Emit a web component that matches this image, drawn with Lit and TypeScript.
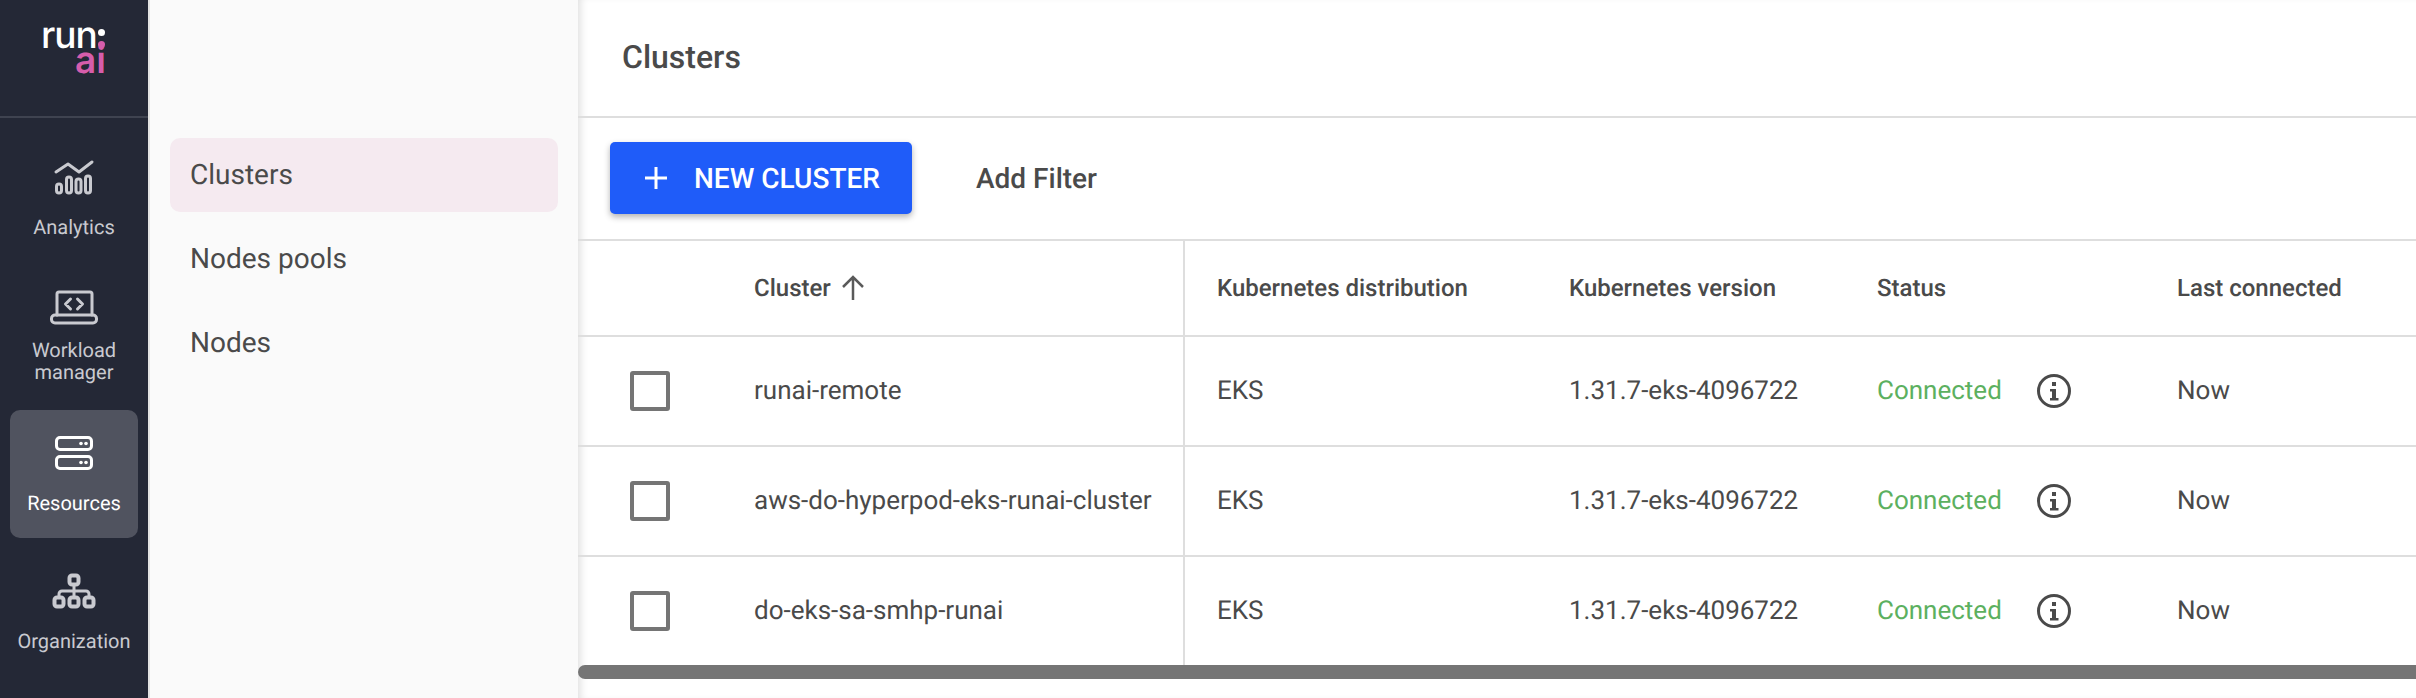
import { LitElement, css, html, svg } from "lit";

const rows = ["runai-remote", "aws-do-hyperpod-eks-runai-cluster", "do-eks-sa-smhp-runai"];

const analyticsIcon = svg`
  <path d="M6 19 18 11 29 19 42 9" />
  <rect x="6.500" y="31" width="5" height="9" rx="2.500" />
  <rect x="16.500" y="24" width="5" height="16" rx="2.500" />
  <rect x="26" y="26" width="5" height="14" rx="2.500" />
  <rect x="35.500" y="23" width="5" height="17" rx="2.500" />
`;

const workloadIcon = svg`
  <path d="M7 33V12a2 2 0 0 1 2-2h31a2 2 0 0 1 2 2v21" />
  <rect x="1.500" y="33" width="45" height="8" rx="3.500" />
  <path d="M20.500 17 15.500 22 20.500 27M27.500 17 32.500 22 27.500 27" />
`;

const resourcesIcon = svg`
  <rect x="6.500" y="8.500" width="35" height="12" rx="3.500" />
  <rect x="6.500" y="27.500" width="35" height="12" rx="3.500" />
  <circle cx="31" cy="14.500" r="1.800" class="dot" />
  <circle cx="36" cy="14.500" r="1.800" class="dot" />
  <circle cx="31" cy="33.500" r="1.800" class="dot" />
  <circle cx="36" cy="33.500" r="1.800" class="dot" />
`;

const organizationIcon = svg`
  <rect x="19.500" y="8.500" width="9" height="9" rx="2.500" class="thick" />
  <rect x="4.500" y="30.500" width="9" height="9" rx="2.500" class="thick" />
  <rect x="19.500" y="30.500" width="9" height="9" rx="2.500" class="thick" />
  <rect x="34.500" y="30.500" width="9" height="9" rx="2.500" class="thick" />
  <path d="M24 18V30M9 30V27a3 3 0 0 1 3-3H36a3 3 0 0 1 3 3V30" />
`;

class AppRoot extends LitElement {
  static styles = css`
    :host {
      display: block;
      height: 698px;
      overflow: hidden;
      font-family: Roboto, "Liberation Sans", sans-serif;
      color: #4a4a4a;
      text-rendering: geometricPrecision;
    }

    .page {
      display: flex;
      height: 698px;
    }

    .rail {
      flex: none;
      width: 148px;
      background: #242836;
      color: #c9cad0;
      font-size: 20px;
      line-height: 22px;
    }

    .logo {
      box-sizing: border-box;
      height: 118px;
      border-bottom: 2px solid #3f4350;
      padding-top: 23px;
      display: flex;
      justify-content: center;
    }

    .logo-mark {
      width: 66px;
      font-family: Inter, sans-serif;
      font-size: 37px;
      font-weight: 500;
      line-height: 24px;
      color: #fff;
    }

    .logo-run {
      display: flex;
      letter-spacing: -1px;
    }

    .logo-colon {
      margin: 6px 0 0 1px;
      display: flex;
      flex-direction: column;
      gap: 5px;
    }

    .logo-colon i {
      width: 7px;
      height: 7px;
      border-radius: 50%;
      background: #fff;
    }

    .logo-colon i:last-child {
      background: #d65dab;
    }

    .logo-ai {
      color: #d65dab;
      font-weight: 600;
      text-align: right;
      padding-right: 1px;
    }

    .nav {
      padding: 16px 10px 0;
    }

    .item {
      height: 128px;
      margin-bottom: 1px;
      box-sizing: border-box;
      padding-top: 19px;
      display: flex;
      flex-direction: column;
      align-items: center;
      gap: 15px;
      border-radius: 10px;
      text-align: center;
    }

    .item.two {
      height: 146px;
      gap: 9px;
    }

    .item.active {
      background: #50535f;
      color: #fff;
      margin-bottom: 10px;
    }

    .item svg {
      width: 48px;
      height: 48px;
      fill: none;
      stroke: currentColor;
      stroke-width: 3;
      stroke-linecap: round;
      stroke-linejoin: round;
    }

    .item svg .dot {
      fill: currentColor;
      stroke: none;
    }

    .item svg .thick {
      stroke-width: 4;
    }

    .subnav {
      flex: none;
      width: 430px;
      box-sizing: border-box;
      padding: 138px 20px 0 20px;
      background: #fafafa;
      border-left: 2px solid #e3e3e3;
      display: flex;
      flex-direction: column;
      gap: 10px;
      font-size: 28px;
    }

    .subitem {
      height: 74px;
      box-sizing: border-box;
      padding: 0 0 2px 20px;
      display: flex;
      align-items: center;
      border-radius: 10px;
    }

    .subitem.active {
      background: #f5eaf0;
    }

    .main {
      flex: 1;
      min-width: 0;
      background: #fff;
      box-shadow: inset 7px 0 8px -5px rgb(0 0 0 / 14%);
    }

    .title {
      height: 118px;
      box-sizing: border-box;
      border-bottom: 2px solid #dedede;
      padding: 0 0 3px 44px;
      display: flex;
      align-items: center;
      font-size: 32px;
      font-weight: 500;
    }

    .toolbar {
      height: 123px;
      box-sizing: border-box;
      padding: 24px 0 0 32px;
      display: flex;
      align-items: flex-start;
      gap: 64px;
      font-size: 28px;
      font-weight: 500;
      border-bottom: 2px solid #dedede;
    }

    .new {
      height: 72px;
      width: 302px;
      box-sizing: border-box;
      padding-left: 34px;
      display: flex;
      align-items: center;
      gap: 26px;
      border-radius: 5px;
      background: #1f5cf9;
      color: #fff;
      box-shadow: 0 3px 6px rgb(0 0 0 / 30%);
    }

    .new svg {
      width: 24px;
      height: 24px;
      stroke: #fff;
      stroke-width: 3;
      fill: none;
    }

    .filter {
      height: 72px;
      display: flex;
      align-items: center;
    }

    .row {
      display: grid;
      grid-template-columns: 176px 431px 384px 308px 160px 140px 1fr;
      height: 110px;
      box-sizing: border-box;
      border-bottom: 2px solid #dedede;
      align-items: center;
      font-size: 26px;
    }

    .row.head {
      height: 96px;
      font-size: 24px;
      font-weight: 500;
    }

    .row.last {
      height: 108px;
      border-bottom: none;
    }

    .cell {
      height: 100%;
      display: flex;
      align-items: center;
      white-space: nowrap;
    }

    .divider {
      border-right: 2px solid #dedede;
      box-sizing: border-box;
    }

    .sub-cell {
      padding-left: 32px;
    }

    .check {
      padding-left: 52px;
    }

    .box {
      width: 40px;
      height: 40px;
      box-sizing: border-box;
      border: 4px solid #757575;
      border-radius: 3px;
    }

    .sort {
      width: 28px;
      height: 28px;
      margin-left: 8px;
      fill: none;
      stroke: #5a5a5a;
      stroke-width: 2.500;
    }

    .connected {
      color: #5cb05f;
    }

    .info {
      width: 36px;
      height: 36px;
      margin-left: -1px;
    }

    .info circle {
      fill: none;
      stroke: #4a4a4a;
      stroke-width: 3;
    }

    .info path {
      fill: #4a4a4a;
    }

    .scrollbar {
      height: 14px;
      background: #757575;
      border-radius: 7px 0 0 7px;
    }
  `;

  private navItem(icon: unknown, label: unknown, cls = "") {
    return html`<div class="item ${cls}">
      <svg viewBox="0 0 48 48">${icon}</svg>
      <span>${label}</span>
    </div>`;
  }

  private renderRow(name: string, index: number) {
    return html`
      <div class="row ${index === rows.length - 1 ? "last" : ""}">
        <div class="cell check"><div class="box"></div></div>
        <div class="cell divider">${name}</div>
        <div class="cell sub-cell">EKS</div>
        <div class="cell">1.31.7-eks-4096722</div>
        <div class="cell connected">Connected</div>
        <div class="cell">
          <svg class="info" viewBox="0 0 36 36">
            <circle cx="18" cy="18" r="15.500" />
            <path d="M16 9h4v4h-4zM14 16h6v9h2.500v2.500h-8.500V25h2v-6.500h-2z" />
          </svg>
        </div>
        <div class="cell">Now</div>
      </div>
    `;
  }

  render() {
    return html`
      <div class="page">
        <aside class="rail">
          <div class="logo">
            <div class="logo-mark">
              <div class="logo-run">run<span class="logo-colon"><i></i><i></i></span></div>
              <div class="logo-ai">ai</div>
            </div>
          </div>
          <nav class="nav">
            ${this.navItem(analyticsIcon, "Analytics")}
            ${this.navItem(workloadIcon, html`Workload<br />manager`, "two")}
            ${this.navItem(resourcesIcon, "Resources", "active")}
            ${this.navItem(organizationIcon, "Organization")}
          </nav>
        </aside>
        <div class="subnav">
          <div class="subitem active">Clusters</div>
          <div class="subitem">Nodes pools</div>
          <div class="subitem">Nodes</div>
        </div>
        <main class="main">
          <div class="title">Clusters</div>
          <div class="toolbar">
            <div class="new">
              <svg viewBox="0 0 24 24"><path d="M12 1v22M1 12h22" /></svg>
              NEW CLUSTER
            </div>
            <div class="filter">Add Filter</div>
          </div>
          <div class="row head">
            <div class="cell"></div>
            <div class="cell divider">
              Cluster
              <svg class="sort" viewBox="0 0 28 28"><path d="M14 26V3M4 13 14 3 24 13" /></svg>
            </div>
            <div class="cell sub-cell">Kubernetes distribution</div>
            <div class="cell">Kubernetes version</div>
            <div class="cell">Status</div>
            <div class="cell"></div>
            <div class="cell">Last connected</div>
          </div>
          ${rows.map((name, i) => this.renderRow(name, i))}
          <div class="scrollbar"></div>
        </main>
      </div>
    `;
  }
}

customElements.define("app-root", AppRoot);
